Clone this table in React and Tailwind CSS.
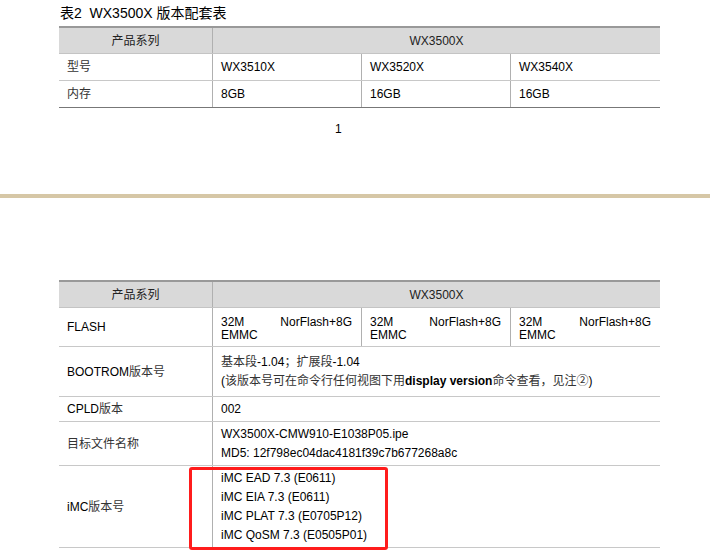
import React from "react";

const font = { fontFamily: '"Liberation Sans", "Noto Sans CJK SC", sans-serif' };

const cols = "grid grid-cols-[154px_149px_149px_149px]";
const cell = "flex items-center border-r border-[#b0b0b0] px-2 last:border-r-0";

const Header = () => (
  <div className={`${cols} h-[28px] border-t-2 border-b border-t-[#999] border-b-[#c4c4c4] bg-[#d9d9d9] text-[12px] text-[#222]`}>
    <div className="flex items-center justify-center border-r border-[#b0b0b0]">产品系列</div>
    <div className="col-span-3 flex items-center justify-center">WX3500X</div>
  </div>
);

const Row = ({ h, label, children, last }) => (
  <div className={`grid grid-cols-[154px_447px] border-b ${last ? "border-[#777]" : "border-[#c8c8c8]"}`} style={{ height: h }}>
    <div className="flex items-center border-r border-[#b0b0b0] px-2 text-[#333]">{label}</div>
    <div className="flex flex-col justify-center px-2 leading-[19px] text-black">{children}</div>
  </div>
);

const SplitRow = ({ h, label, values, last, tall }) => (
  <div className={`${cols} border-b ${last ? "border-[#777]" : "border-[#c8c8c8]"}`} style={{ height: h }}>
    <div className={`${cell} text-[#333]`}>{label}</div>
    {values.map((v, i) => (
      <div key={i} className={`${cell} text-black`}>
        {tall ? (
          <div className="w-full pt-[3px] leading-[13px]">
            <div className="flex justify-between pr-[1px]">
              <span>32M</span>
              <span>NorFlash+8G</span>
            </div>
            <div>EMMC</div>
          </div>
        ) : (
          v
        )}
      </div>
    ))}
  </div>
);

export default function App() {
  return (
    <div className="relative h-[552px] w-[710px] overflow-hidden bg-white text-[12px]" style={font}>
      <div className="pl-[60px] pt-[3px] text-[14px] leading-[20px] text-black">表2&nbsp; WX3500X 版本配套表</div>

      <div className="ml-[59px] mt-[3px] w-[601px]">
        <Header />
        <SplitRow h={27} label="型号" values={["WX3510X", "WX3520X", "WX3540X"]} />
        <SplitRow h={27} label="内存" values={["8GB", "16GB", "16GB"]} last />
      </div>

      <div className="mt-[14px] pl-[335px] text-[12px] leading-[14px] text-black">1</div>

      <div className="mt-[58px] h-[4px] w-full bg-[#d6c7a6]" />

      <div className="ml-[59px] mt-[82px] w-[601px]">
        <Header />
        <SplitRow h={39} label={<span className="text-black">FLASH</span>} values={[1, 2, 3]} tall />
        <Row h={50} label={<span className="text-black">BOOTROM<span className="text-[#333]">版本号</span></span>}>
          <div><span className="text-[#333]">基本段</span>-1.04<span className="text-[#333]">；扩展段</span>-1.04</div>
          <div>
            (<span className="text-[#333]">该版本号可在命令行任何视图下用</span>
            <b>display version</b>
            <span className="text-[#333]">命令查看，见注②</span>)
          </div>
        </Row>
        <Row h={25} label={<span className="text-black">CPLD<span className="text-[#333]">版本</span></span>}>
          <div>002</div>
        </Row>
        <Row h={44} label="目标文件名称">
          <div>WX3500X-CMW910-E1038P05.ipe</div>
          <div>MD5: 12f798ec04dac4181f39c7b677268a8c</div>
        </Row>
        <Row h={82} label={<span className="text-black">iMC<span className="text-[#333]">版本号</span></span>}>
          <div>iMC EAD 7.3 (E0611)</div>
          <div>iMC EIA 7.3 (E0611)</div>
          <div>iMC PLAT 7.3 (E0705P12)</div>
          <div>iMC QoSM 7.3 (E0505P01)</div>
        </Row>
      </div>

      <div className="absolute left-[189px] top-[467px] h-[83px] w-[199px] rounded-[3px] border-[3px] border-[#ff1c1c]" />
    </div>
  );
}
